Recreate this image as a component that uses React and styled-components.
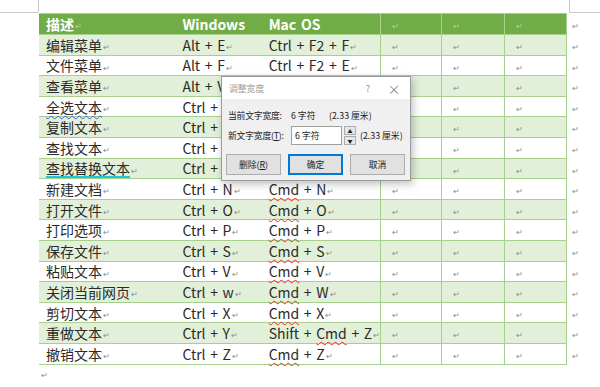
import React from 'react';
import styled, { createGlobalStyle } from 'styled-components';

const GlobalStyle = createGlobalStyle`
  body {
    margin: 0;
    background: #ffffff;
    font-family: "Noto Sans CJK SC", "Noto Sans", sans-serif;
  }
`;

const Page = styled.div`
  position: relative;
  width: 600px;
  height: 387px;
  overflow: hidden;
  padding: 13px 0 0 39px;
  box-sizing: border-box;
  background: #fff;

  &::before {
    content: '';
    position: absolute;
    left: 0;
    top: 12px;
    width: 38px;
    height: 12px;
    border-top: 1px solid #c8c8c8;
  }
  &::after {
    content: '';
    position: absolute;
    left: 569px;
    top: 0;
    width: 31px;
    height: 12px;
    border-left: 1px solid #c8c8c8;
    border-bottom: 1px solid #c8c8c8;
  }
`;

const CornerLeft = styled.div`
  position: absolute;
  left: 38px;
  top: 0;
  height: 12px;
  border-left: 1px solid #c8c8c8;
`;

const Table = styled.table`
  border-collapse: collapse;
  table-layout: fixed;
  font-size: 14px;
  color: #2a2a2a;
`;

const Row = styled.tr`
  background: ${p => (p.$head ? '#70ad47' : p.$shade ? '#e2efd9' : '#ffffff')};
  color: ${p => (p.$head ? '#ffffff' : '#2a2a2a')};
  font-weight: ${p => (p.$head ? 700 : 400)};
`;

const Cell = styled.td`
  width: ${p => p.$w}px;
  height: ${p => p.$h}px;
  padding: 0 0 0 ${p => p.$pad ?? 7}px;
  box-sizing: border-box;
  white-space: nowrap;
  line-height: 16px;
  word-spacing: ${p => (p.$latin ? '1.5px' : '0')};
  border-top: 1px solid #a8d08d;
  border-bottom: 1px solid #a8d08d;
  border-left: ${p => (p.$line ? '1px solid #a8d08d' : 'none')};
  border-right: ${p => (p.$lastcol ? '1px solid #a8d08d' : 'none')};
  vertical-align: middle;
`;

const Outside = styled.td`
  width: 30px;
  padding: 0 0 0 4px;
  line-height: 16px;
  background: #fff;
  border: none;
`;

const Mark = styled.span`
  font-size: 8px;
  line-height: 1;
  color: ${p => (p.$light ? '#b7d3a3' : '#8a8a8a')};
  margin-left: 1px;
  font-weight: 400;
  vertical-align: middle;
`;

const Wavy = styled.span`
  text-decoration-line: underline;
  text-decoration-style: wavy;
  text-decoration-color: ${p => p.$color};
  text-decoration-thickness: 1px;
  text-underline-offset: 2px;
`;

const Under = styled.span`
  text-decoration-line: underline;
  text-decoration-style: solid;
  text-decoration-color: #1fc6d6;
  text-decoration-thickness: 2px;
  text-underline-offset: 2px;
`;

const EndMark = styled.div`
  padding: 5px 0 0 2px;
  font-size: 8px;
  line-height: 10px;
  color: #8a8a8a;
`;

const Dialog = styled.div`
  position: absolute;
  left: 221px;
  top: 76px;
  width: 190px;
  height: 105px;
  box-sizing: border-box;
  border: 1px solid #9a9a9a;
  background: #f0f0f0;
  box-shadow: 2px 3px 8px rgba(0, 0, 0, 0.25);
  font-size: 8.8px;
  color: #1a1a1a;
  display: flex;
  flex-direction: column;
  white-space: nowrap;
`;

const TitleBar = styled.div`
  height: 22px;
  background: #ffffff;
  display: flex;
  align-items: center;
  padding: 0 0 0 7px;
  color: #9a9a9a;
`;

const Title = styled.span`
  flex: 1;
`;

const TitleBtn = styled.span`
  width: ${p => p.$w}px;
  text-align: center;
  color: #8a8a8a;
  font-size: ${p => p.$size}px;
  line-height: 1;
`;

const Body = styled.div`
  padding: 9px 6px 0 6px;
  display: flex;
  flex-direction: column;
  gap: 4px;
`;

const Line = styled.div`
  display: flex;
  align-items: center;
  height: ${p => p.$h}px;
`;

const Label = styled.span`
  width: 63px;
  flex-shrink: 0;
  letter-spacing: -0.2px;
`;

const Value = styled.span`
  width: 38px;
  flex-shrink: 0;
`;

const Input = styled.div`
  width: 51px;
  height: 19px;
  box-sizing: border-box;
  border: 1px solid #a0a0a0;
  background: #fff;
  display: flex;
  align-items: center;
  padding-left: 3px;
  flex-shrink: 0;
`;

const Spin = styled.div`
  width: 12px;
  height: 19px;
  margin-left: 2px;
  display: flex;
  flex-direction: column;
  gap: 1px;
  flex-shrink: 0;
`;

const SpinBtn = styled.div`
  flex: 1;
  border: 1px solid #adadad;
  background: #e6e6e6;
  display: flex;
  align-items: center;
  justify-content: center;
  font-size: 5px;
  line-height: 1;
  color: #222;
`;

const Suffix = styled.span`
  margin-left: 4px;
`;

const Buttons = styled.div`
  display: flex;
  gap: 7px;
  padding: 9px 5px 0 4px;
`;

const Button = styled.div`
  width: 55px;
  height: 21px;
  box-sizing: border-box;
  border: 1px solid ${p => (p.$primary ? '#0078d7' : '#adadad')};
  box-shadow: ${p => (p.$primary ? 'inset 0 0 0 1px #0078d7' : 'none')};
  background: #e1e1e1;
  display: flex;
  align-items: center;
  justify-content: center;
`;

const cols = [139, 87, 114, 63, 64, 64];

const rows = [
  ['编辑菜单', 'Alt + E', 'Ctrl + F2 + F'],
  ['文件菜单', 'Alt + F', 'Ctrl + F2 + E'],
  ['查看菜单', 'Alt + V', 'Ctrl + F2 + V'],
  ['全选文本', 'Ctrl + A', 'Cmd + A', 'blue'],
  ['复制文本', 'Ctrl + C', 'Cmd + C'],
  ['查找文本', 'Ctrl + F', 'Cmd + F'],
  ['查找替换文本', 'Ctrl + H', 'Cmd + H', 'cyan'],
  ['新建文档', 'Ctrl + N', 'Cmd + N'],
  ['打开文件', 'Ctrl + O', 'Cmd + O'],
  ['打印选项', 'Ctrl + P', 'Cmd + P'],
  ['保存文件', 'Ctrl + S', 'Cmd + S'],
  ['粘贴文本', 'Ctrl + V', 'Cmd + V'],
  ['关闭当前网页', 'Ctrl + w', 'Cmd + W'],
  ['剪切文本', 'Ctrl + X', 'Cmd + X'],
  ['重做文本', 'Ctrl + Y', 'Shift + Cmd + Z'],
  ['撤销文本', 'Ctrl + Z', 'Cmd + Z'],
];

const renderMac = (text) => {
  if (!text.includes('Cmd')) return text;
  const [before, after] = text.split('Cmd');
  return (
    <>
      {before}
      <Wavy $color="#e0342c">Cmd</Wavy>
      {after}
    </>
  );
};

const renderDesc = (text, deco) => {
  if (deco === 'blue') return <Wavy $color="#3b5bdb">{text}</Wavy>;
  if (deco === 'cyan') return <Under>{text}</Under>;
  return text;
};

const Empty = ({ head, w, h, last }) => (
  <Cell $w={w} $h={h} $line $lastcol={last} $pad={10}>
    <Mark $light={head}>↵</Mark>
  </Cell>
);

export default function App() {
  const rh = 20.6;
  return (
    <>
      <GlobalStyle />
      <Page>
        <CornerLeft />
        <Table>
          <tbody>
            <Row $head>
              <Cell $w={cols[0]} $h={21}>描述<Mark $light>↵</Mark></Cell>
              <Cell $w={cols[1]} $h={21} $pad={6} $latin>Windows</Cell>
              <Cell $w={cols[2]} $h={21} $pad={6} $latin>Mac OS</Cell>
              <Empty head w={cols[3]} h={21} />
              <Empty head w={cols[4]} h={21} />
              <Empty head w={cols[5]} h={21} last />
              <Outside><Mark>↵</Mark></Outside>
            </Row>
            {rows.map((r, i) => (
              <Row key={i} $shade={i % 2 === 0}>
                <Cell $w={cols[0]} $h={rh}>{renderDesc(r[0], r[3])}<Mark>↵</Mark></Cell>
                <Cell $w={cols[1]} $h={rh} $pad={6} $latin>{r[1]}<Mark>↵</Mark></Cell>
                <Cell $w={cols[2]} $h={rh} $pad={6} $latin>{renderMac(r[2])}<Mark>↵</Mark></Cell>
                <Empty w={cols[3]} h={rh} />
                <Empty w={cols[4]} h={rh} />
                <Empty w={cols[5]} h={rh} last />
                <Outside><Mark>↵</Mark></Outside>
              </Row>
            ))}
          </tbody>
        </Table>
        <EndMark>↵</EndMark>

        <Dialog>
          <TitleBar>
            <Title>调整宽度</Title>
            <TitleBtn $w={20} $size={9}>?</TitleBtn>
            <TitleBtn $w={32} $size={13}>×</TitleBtn>
          </TitleBar>
          <Body>
            <Line $h={14}>
              <Label>当前文字宽度:</Label>
              <Value>6 字符</Value>
              <span>(2.33 厘米)</span>
            </Line>
            <Line $h={19}>
              <Label>新文字宽度(<u>T</u>):</Label>
              <Input>6 字符</Input>
              <Spin>
                <SpinBtn>▲</SpinBtn>
                <SpinBtn>▼</SpinBtn>
              </Spin>
              <Suffix>(2.33 厘米)</Suffix>
            </Line>
          </Body>
          <Buttons>
            <Button>删除(<u>R</u>)</Button>
            <Button $primary>确定</Button>
            <Button>取消</Button>
          </Buttons>
        </Dialog>
      </Page>
    </>
  );
}
